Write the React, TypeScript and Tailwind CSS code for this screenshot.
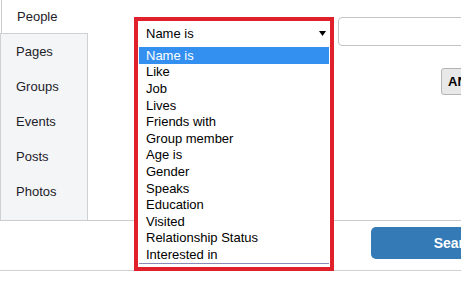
export default function App() {
  const tabs = ["Pages", "Groups", "Events", "Posts", "Photos"];
  const options = [
    "Name is",
    "Like",
    "Job",
    "Lives",
    "Friends with",
    "Group member",
    "Age is",
    "Gender",
    "Speaks",
    "Education",
    "Visited",
    "Relationship Status",
    "Interested in",
  ];

  return (
    <div className="relative w-[461px] h-[283px] overflow-hidden bg-white font-['Liberation_Sans',Arial,sans-serif]">
      {/* main area */}
      <div className="flex h-[221px] border-b border-[#cccccc]">
        <div className="w-[88px] flex flex-col">
          <div className="h-[33px] border-l border-[#cccccc] ml-[1px] pl-[15px] flex items-center text-[13px] text-[#1d2129]">
            People
          </div>
          <div className="flex-1 bg-[#f4f5f7] border-t border-r border-l border-[#d0d0d0] pl-[15px]">
            {tabs.map((t) => (
              <div
                key={t}
                className="h-[35px] flex items-center text-[13px] text-[#1d2129]"
              >
                {t}
              </div>
            ))}
          </div>
        </div>
        <div className="flex-1 relative">
          <div className="absolute left-[250px] top-[17px] w-[200px] h-[29px] rounded border border-[#c4c4c4] bg-white" />
          <div className="absolute left-[353px] top-[68px] w-[40px] h-[27px] rounded-[3px] border border-[#b4b4b4] bg-[#e8e8e8] pl-[6px] flex items-center text-[13px] font-bold text-black">
            AND
          </div>
        </div>
      </div>

      {/* footer */}
      <div className="h-[50px] border-b border-[#d0d0d0] relative">
        <div className="absolute left-[371px] top-[6px] w-[172px] h-[32px] rounded-[5px] bg-[#337ab7] flex items-center justify-center text-[14px] font-bold text-white">
          Search
        </div>
      </div>

      {/* open select dropdown, highlighted */}
      <div className="absolute left-[134px] top-[17px] w-[200px] h-[254px] border-4 border-[#e0202a] bg-white flex flex-col">
        <div className="h-[25px] flex items-center justify-between pl-[8px] pr-[3px] text-[13px] text-black">
          <span>Name is</span>
          <svg width="7" height="5" viewBox="0 0 7 5" className="mr-[1px]">
            <path d="M0 0 L7 0 L3.5 5 Z" fill="#000" />
          </svg>
        </div>
        <div className="mt-[1px] mx-[1px] border-b border-[#8a8ab8] flex flex-col">
          {options.map((o, i) => (
            <div
              key={o}
              className={
                i === 0
                  ? "h-[16.6px] pl-[7px] flex items-center text-[13px] leading-none bg-[#3390f0] text-white"
                  : "h-[16.6px] pl-[7px] flex items-center text-[13px] leading-none text-black"
              }
            >
              {o}
            </div>
          ))}
        </div>
      </div>
    </div>
  );
}
